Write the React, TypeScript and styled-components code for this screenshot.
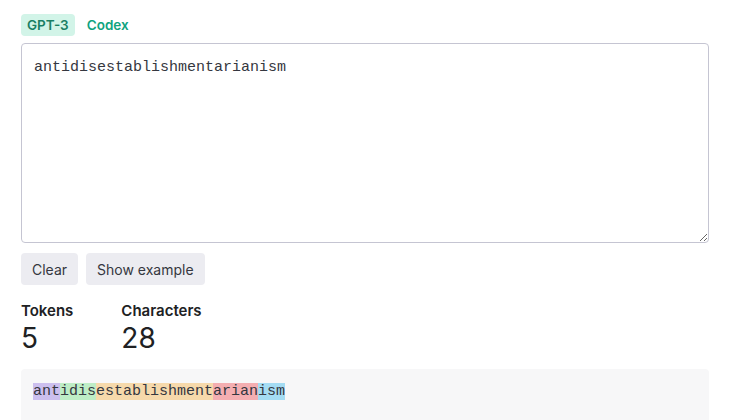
import React, { useState } from "react";
import styled, { createGlobalStyle } from "styled-components";

const GlobalStyle = createGlobalStyle`
  body {
    margin: 0;
    background: #fff;
    font-family: Inter, "Noto Sans", sans-serif;
    color: #202123;
    overflow: hidden;
  }
`;

const Page = styled.div`
  padding: 14px 30px 0 21px;
  display: flex;
  flex-direction: column;
`;

const Tabs = styled.div`
  display: flex;
  gap: 6px;
  margin-bottom: 7px;
`;

const Tab = styled.button<{ $active?: boolean }>`
  font-family: Inter, sans-serif;
  font-size: 13.5px;
  font-weight: 600;
  height: 22px;
  padding: 0 6px;
  border: none;
  border-radius: 4px;
  background: ${(p) => (p.$active ? "#d2f4e8" : "transparent")};
  color: ${(p) => (p.$active ? "#1a7f64" : "#10a37f")};
  cursor: pointer;
`;

const Input = styled.textarea`
  box-sizing: border-box;
  width: 688px;
  height: 200px;
  padding: 13px 12px;
  border: 1px solid #c5c5d2;
  border-radius: 4px;
  font-family: "Liberation Mono", monospace;
  font-size: 15px;
  line-height: 22px;
  color: #353740;
  resize: vertical;
  outline: none;
`;

const Buttons = styled.div`
  display: flex;
  gap: 8px;
  margin-top: 10px;
`;

const Button = styled.button`
  font-family: Inter, sans-serif;
  font-size: 14px;
  height: 32px;
  padding: 0 11px;
  border: none;
  border-radius: 4px;
  background: #ececf1;
  color: #353740;
  cursor: pointer;
`;

const Stats = styled.div`
  display: flex;
  gap: 48px;
  margin-top: 16px;
`;

const Stat = styled.div`
  display: flex;
  flex-direction: column;
`;

const StatLabel = styled.div`
  font-size: 15px;
  font-weight: 600;
  line-height: 20px;
  color: #202123;
`;

const StatValue = styled.div`
  font-size: 28px;
  font-weight: 400;
  line-height: 34px;
  color: #202123;
`;

const Output = styled.div`
  box-sizing: border-box;
  width: 688px;
  height: 51px;
  margin-top: 14px;
  padding: 13px 12px;
  background: #f7f7f8;
  border-radius: 4px 4px 0 0;
  font-family: "Liberation Mono", monospace;
  font-size: 15px;
  line-height: 20px;
  color: #353740;
`;

const Token = styled.span<{ $color: string }>`
  background: ${(p) => p.$color};
`;

const tokenColors = [
  "rgba(107,64,216,0.3)",
  "rgba(104,222,122,0.4)",
  "rgba(244,172,54,0.4)",
  "rgba(239,65,70,0.4)",
  "rgba(39,181,234,0.4)",
];

const tokens = ["ant", "idis", "establishment", "arian", "ism"];

export default function App() {
  const [text, setText] = useState("antidisestablishmentarianism");
  return (
    <>
      <GlobalStyle />
      <Page>
        <Tabs>
          <Tab $active>GPT-3</Tab>
          <Tab>Codex</Tab>
        </Tabs>
        <Input value={text} onChange={(e) => setText(e.target.value)} />
        <Buttons>
          <Button onClick={() => setText("")}>Clear</Button>
          <Button>Show example</Button>
        </Buttons>
        <Stats>
          <Stat>
            <StatLabel>Tokens</StatLabel>
            <StatValue>5</StatValue>
          </Stat>
          <Stat>
            <StatLabel>Characters</StatLabel>
            <StatValue>{text.length}</StatValue>
          </Stat>
        </Stats>
        <Output>
          {tokens.map((t, i) => (
            <Token key={i} $color={tokenColors[i % tokenColors.length]}>
              {t}
            </Token>
          ))}
        </Output>
      </Page>
    </>
  );
}
